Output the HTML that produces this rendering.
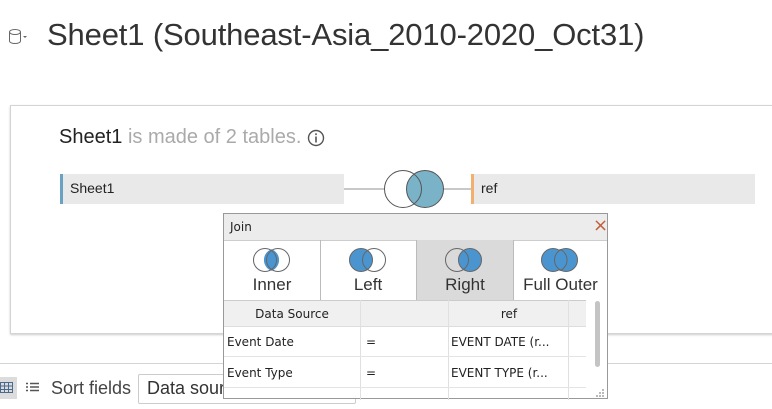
<!DOCTYPE html>
<html><head><style>
body{margin:0;width:772px;height:409px;overflow:hidden;background:#fff;font-family:"Liberation Sans",sans-serif;position:relative}
.a{position:absolute}
.hd{font-family:"DejaVu Sans","Liberation Sans",sans-serif}
</style></head><body>
<svg class="a" style="left:8px;top:28px" width="28" height="18"><ellipse cx="7" cy="4" rx="5.5" ry="2.5" fill="none" stroke="#666"/><path d="M1.5 4v9c0 1.4 2.4 2.5 5.5 2.5s5.5-1.1 5.5-2.5V4" fill="none" stroke="#666"/><path d="M15 8l4 0 -2 2z" fill="#666"/></svg>
<div class="a" style="left:47px;top:17px;font-size:31px;color:#333;letter-spacing:-0.15px">Sheet1 (Southeast-Asia_2010-2020_Oct31)</div>
<div class="a" style="left:10px;top:105px;width:780px;height:227px;border:1px solid #d4d4d4;box-shadow:0 1px 2px #ccc"></div>
<div class="a" style="left:59px;top:126px;font-size:20px;color:#222">Sheet1 <span style="color:#aaa">is made of 2 tables.</span></div>
<svg class="a" style="left:307px;top:129px" width="18" height="18"><circle cx="9" cy="9" r="7.5" fill="none" stroke="#555" stroke-width="1.4"/><rect x="8.2" y="7.5" width="1.6" height="6" fill="#555"/><rect x="8.2" y="4.3" width="1.6" height="1.8" fill="#555"/></svg>
<div class="a" style="left:60px;top:174px;width:284px;height:30px;background:#e9e9e9;border-left:3px solid #6aa3c2;box-sizing:border-box"></div>
<div class="a" style="left:70px;top:180px;font-size:14px;color:#222">Sheet1</div>
<div class="a" style="left:471px;top:174px;width:284px;height:30px;background:#e9e9e9;border-left:3px solid #f2b070;box-sizing:border-box"></div>
<div class="a" style="left:481px;top:180px;font-size:14px;color:#222">ref</div>
<div class="a" style="left:344px;top:188px;width:40px;height:2px;background:#c8c8c8"></div>
<div class="a" style="left:444px;top:188px;width:27px;height:2px;background:#c8c8c8"></div>
<svg class="a" style="left:380px;top:168px" width="70" height="44"><circle cx="45" cy="21" r="18.5" fill="#7ab3c7" stroke="#555"/><circle cx="23" cy="21" r="18.5" fill="none" stroke="#555"/></svg>
<div class="a" style="left:0;top:363px;width:772px;height:1px;background:#d4d4d4"></div>
<div class="a" style="left:0;top:377px;width:17px;height:22px;background:#dcdcdc"></div>
<svg class="a" style="left:0;top:382px" width="14" height="12"><rect x="0.5" y="0.5" width="12" height="10" fill="none" stroke="#4a6a90"/><path d="M0 4h13M0 7.5h13M4.5 0v11M8.5 0v11" stroke="#4a6a90"/></svg>
<svg class="a" style="left:26px;top:382px" width="14" height="12"><path d="M0 1.5h2M4 1.5h9M0 5h2M4 5h9M0 8.5h2M4 8.5h9" stroke="#555" stroke-width="1.5"/></svg>
<div class="a" style="left:51px;top:378px;font-size:18px;color:#444">Sort fields</div>
<div class="a" style="left:138px;top:374px;width:218px;height:30px;border:1px solid #ccc;border-radius:2px;box-sizing:border-box"></div>
<div class="a" style="left:147px;top:378px;font-size:18px;color:#333">Data sour</div>
<div class="a hd" style="left:223px;top:213px;width:385px;height:186px;border:1px solid #999;background:#fff;box-sizing:border-box;font-size:12px;color:#222">
 <div class="a" style="left:0;top:0;width:383px;height:26px;background:#ececec;border-bottom:1px solid #ccc"></div>
 <div class="a" style="left:6px;top:6px">Join</div>
 <div class="a" style="left:369px;top:1px;font-size:18px;color:#c0603a">×</div>
 <div class="a" style="left:0;top:26px;width:96px;height:60px;border-right:1px solid #bbb"></div>
 <div class="a" style="left:96px;top:26px;width:96px;height:60px;border-right:1px solid #bbb"></div>
 <div class="a" style="left:193px;top:26px;width:96px;height:60px;background:#dadada;border-right:1px solid #bbb"></div>
 <svg class="a" style="left:28px;top:33px" width="40" height="26"><path d="M19.5 2.2a11.5 11.5 0 0 1 0 21.6a11.5 11.5 0 0 1 0-21.6z" fill="#4a95d0"/><circle cx="13" cy="13" r="11.5" fill="none" stroke="#666"/><circle cx="26" cy="13" r="11.5" fill="none" stroke="#666"/></svg>
 <svg class="a" style="left:124px;top:33px" width="40" height="26"><circle cx="13" cy="13" r="11.5" fill="#4a95d0" stroke="#666"/><circle cx="26" cy="13" r="11.5" fill="none" stroke="#666"/></svg>
 <svg class="a" style="left:220px;top:33px" width="40" height="26"><circle cx="26" cy="13" r="11.5" fill="#4a95d0" stroke="#666"/><circle cx="13" cy="13" r="11.5" fill="none" stroke="#666"/></svg>
 <svg class="a" style="left:316px;top:33px" width="40" height="26"><circle cx="13" cy="13" r="11.5" fill="#4a95d0" stroke="#666"/><circle cx="26" cy="13" r="11.5" fill="#4a95d0" stroke="#666"/><path d="M19.5 2.2a11.5 11.5 0 0 1 0 21.6" fill="none" stroke="#666"/></svg>
 <div class="a" style="left:0;top:61px;width:96px;text-align:center;font-size:17px;color:#333;font-family:'Liberation Sans',sans-serif">Inner</div>
 <div class="a" style="left:96px;top:61px;width:96px;text-align:center;font-size:17px;color:#333;font-family:'Liberation Sans',sans-serif">Left</div>
 <div class="a" style="left:193px;top:61px;width:96px;text-align:center;font-size:17px;color:#333;font-family:'Liberation Sans',sans-serif">Right</div>
 <div class="a" style="left:290px;top:61px;width:93px;text-align:center;font-size:17px;color:#333;font-family:'Liberation Sans',sans-serif">Full Outer</div>
 <div class="a" style="left:0;top:86px;width:362px;height:25px;background:#f0f0f0;border-top:1px solid #ccc;border-bottom:1px solid #ddd"></div>
 <div class="a" style="left:0;top:93px;width:136px;text-align:center">Data Source</div>
 <div class="a" style="left:225px;top:93px;width:120px;text-align:center">ref</div>
 <div class="a" style="left:136px;top:86px;width:1px;height:100px;background:#e0e0e0"></div>
 <div class="a" style="left:224px;top:86px;width:1px;height:100px;background:#e0e0e0"></div>
 <div class="a" style="left:344px;top:86px;width:1px;height:100px;background:#e0e0e0"></div>
 <div class="a" style="left:0;top:142px;width:362px;height:1px;background:#e4e4e4"></div>
 <div class="a" style="left:0;top:173px;width:362px;height:1px;background:#e4e4e4"></div>
 <div class="a" style="left:3px;top:121px">Event Date</div>
 <div class="a" style="left:142px;top:121px">=</div>
 <div class="a" style="left:227px;top:121px">EVENT DATE (r...</div>
 <div class="a" style="left:3px;top:152px">Event Type</div>
 <div class="a" style="left:142px;top:152px">=</div>
 <div class="a" style="left:227px;top:152px">EVENT TYPE (r...</div>
 <div class="a" style="left:371px;top:87px;width:5px;height:66px;background:#c4c4c4;border-radius:3px"></div>
 <svg class="a" style="left:372px;top:175px" width="10" height="9"><path d="M6 0h2v2H6zM3 3h2v2H3zM6 3h2v2H6zM0 6h2v2H0zM3 6h2v2H3zM6 6h2v2H6z" fill="#bbb"/></svg>
</div>
</body></html>
